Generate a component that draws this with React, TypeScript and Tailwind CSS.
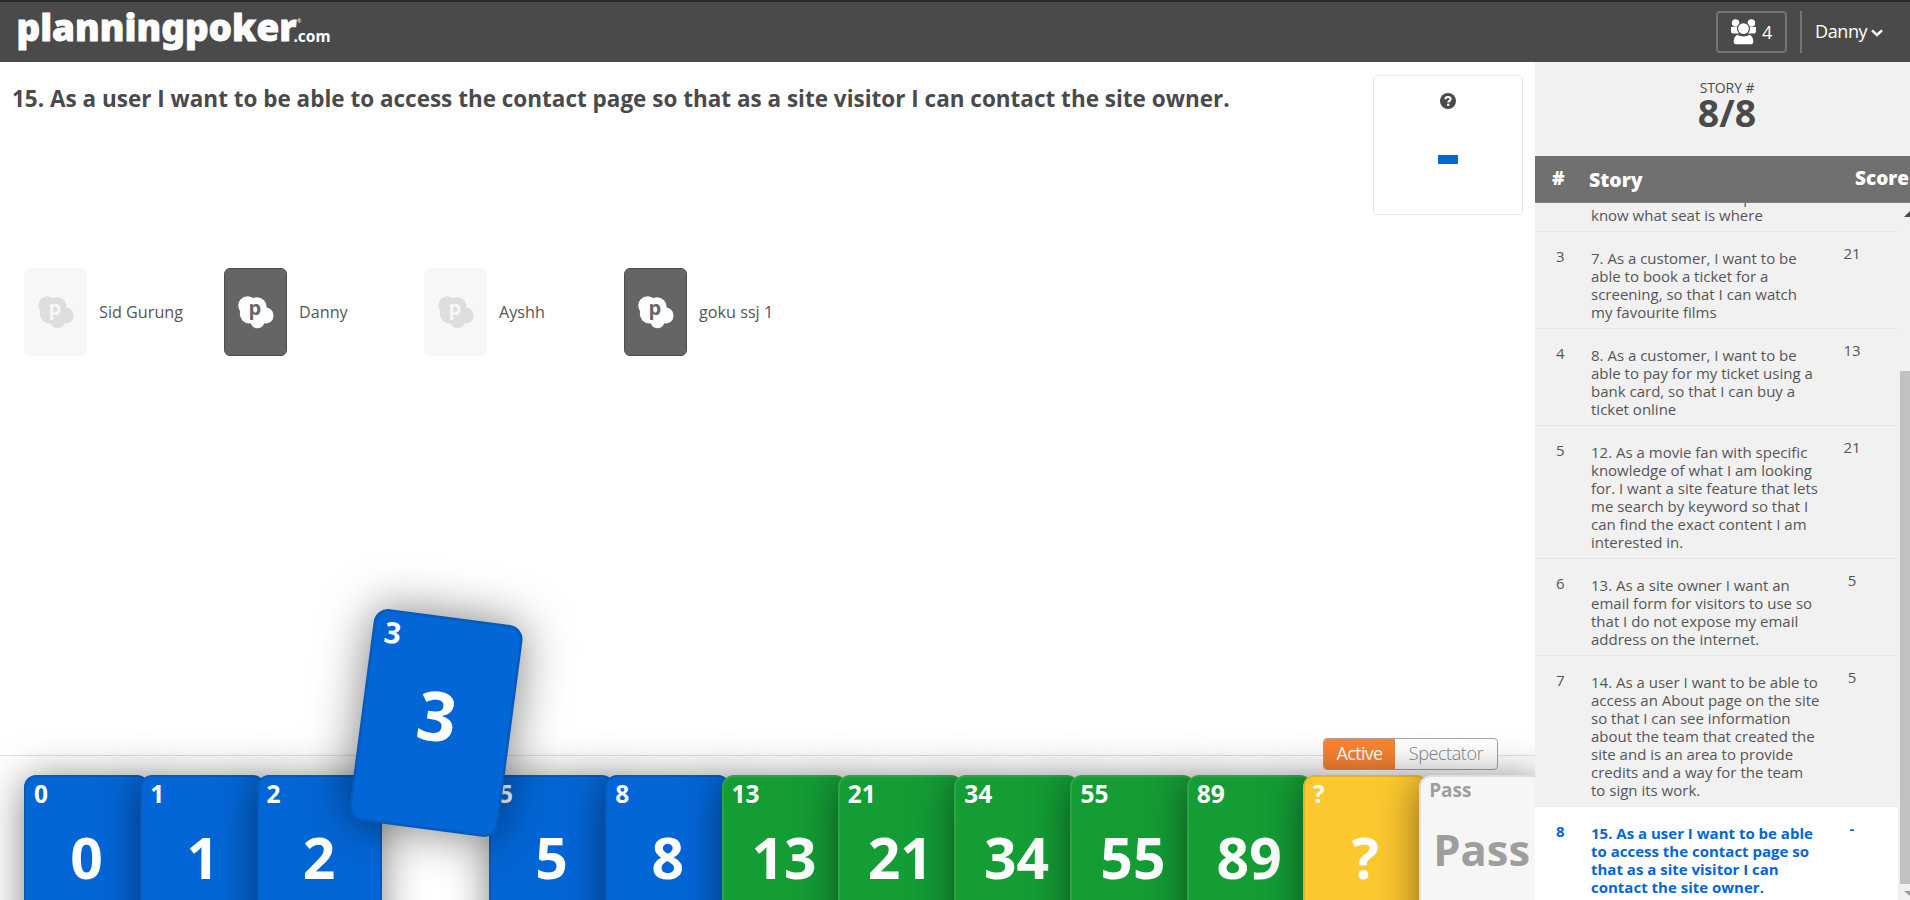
import React from "react";

type Tone = "blue" | "green" | "yellow" | "pass";

const TONES: Record<Tone, string> = {
  blue: "bg-[#0366d6] border-[#055bbd] text-white",
  green: "bg-[#149d35] border-[#2ba449] text-white",
  yellow: "bg-[#fdc82f] border-[#e6b328] text-white",
  pass: "bg-[#f6f6f6] border-[#dedede] text-[#9e9e9e]",
};

const DECK: { label: string; tone: Tone; picked?: boolean }[] = [
  { label: "0", tone: "blue" },
  { label: "1", tone: "blue" },
  { label: "2", tone: "blue" },
  { label: "3", tone: "blue", picked: true },
  { label: "5", tone: "blue" },
  { label: "8", tone: "blue" },
  { label: "13", tone: "green" },
  { label: "21", tone: "green" },
  { label: "34", tone: "green" },
  { label: "55", tone: "green" },
  { label: "89", tone: "green" },
  { label: "?", tone: "yellow" },
  { label: "Pass", tone: "pass" },
];

const STORIES = [
  { n: "3", score: "21", lines: ["7. As a customer, I want to be", "able to book a ticket for a", "screening, so that I can watch", "my favourite films"] },
  { n: "4", score: "13", lines: ["8. As a customer, I want to be", "able to pay for my ticket using a", "bank card, so that I can buy a", "ticket online"] },
  { n: "5", score: "21", lines: ["12. As a movie fan with specific", "knowledge of what I am looking", "for. I want a site feature that lets", "me search by keyword so that I", "can find the exact content I am", "interested in."] },
  { n: "6", score: "5", lines: ["13. As a site owner I want an", "email form for visitors to use so", "that I do not expose my email", "address on the internet."] },
  { n: "7", score: "5", lines: ["14. As a user I want to be able to", "access an About page on the site", "so that I can see information", "about the team that created the", "site and is an area to provide", "credits and a way for the team", "to sign its work."] },
  { n: "8", score: "-", active: true, lines: ["15. As a user I want to be able", "to access the contact page so", "that as a site visitor I can", "contact the site owner."] },
];

const PLAYERS = [
  { name: "Sid Gurung", voted: false },
  { name: "Danny", voted: true },
  { name: "Ayshh", voted: false },
  { name: "goku ssj 1", voted: true },
];

function Logo() {
  return (
    <svg width="340" height="60" className="block" fill="#fff" fontFamily="'Noto Sans', sans-serif">
      <text x="16.500" y="39" fontSize="37" fontWeight="900" textLength="280" lengthAdjust="spacingAndGlyphs" stroke="#fff" strokeWidth="0.8">planningpoker</text>
      <text x="293.500" y="39.500" fontSize="15.500" fontWeight="700" textLength="37" lengthAdjust="spacingAndGlyphs">.com</text>
      <text x="297" y="21" fontSize="5">®</text>
    </svg>
  );
}

function People() {
  return (
    <svg width="25" height="26" viewBox="0 0 25 26" fill="#fff">
      <circle cx="4.600" cy="4" r="3.800" />
      <circle cx="20.400" cy="4" r="3.800" />
      <path d="M0 8h7.500l1 6.500H2.200A2.200 2.200 0 0 1 0 12.300zM25 8h-7.500l-1 6.500h6.300a2.200 2.200 0 0 0 2.200-2.200z" />
      <circle cx="12.500" cy="9.600" r="6" stroke="#4a4a4a" strokeWidth="1.200" />
      <path d="M6.500 15.800c3 2.200 9 2.200 12 0 2.500 1 3.500 3.500 3.800 6 .2 2.200-.6 3.500-2.300 3.500H5c-1.700 0-2.500-1.300-2.300-3.500.3-2.500 1.300-5 3.800-6z" />
    </svg>
  );
}

function Cloud({ voted }: { voted: boolean }) {
  return (
    <svg width="36" height="33" viewBox="0 0 36 33" fill={voted ? "#fff" : "#dedede"}>
      <circle cx="9.600" cy="9.600" r="9.400" />
      <circle cx="19" cy="11" r="9.700" />
      <circle cx="11.500" cy="17.800" r="9.700" />
      <circle cx="27.500" cy="19.500" r="8.100" />
      <circle cx="19.500" cy="25.300" r="7" />
      <path d="M8 12h18v15H10z" />
      <text x="10.500" y="18.500" fontSize="20" fontWeight="700" fill={voted ? "#656565" : "#f7f7f7"} fontFamily="'Open Sans', sans-serif">p</text>
    </svg>
  );
}

function PokerCard({ label, tone, picked }: { label: string; tone: Tone; picked?: boolean }) {
  const pass = tone === "pass";
  return (
    <div className={"w-[116.27px] shrink-0 " + (picked ? "relative z-10" : "relative")}>
      <div
        className={
          "flex h-[178px] w-[125px] flex-col rounded-[12px] border-2 font-bold " +
          TONES[tone] +
          (picked
            ? " translate-x-[0.5px] translate-y-[-141px] rotate-[7.5deg] scale-[1.2] shadow-[0_0_40px_rgba(0,0,0,0.5)]"
            : " shadow-[0_4px_40px_rgba(0,0,0,0.5)]")
        }
      >
        <div className={pass ? "mt-px h-[29px] pl-[8px] text-[19px] leading-[25px]" : "mt-[3px] h-[27px] pl-[8px] text-[24.500px] leading-[28px]"}>{label}</div>
        <div className={pass ? "mt-[13px] text-center text-[43.500px] leading-[60px]" : "mt-[20px] text-center text-[57px] leading-[60px]"}>{label}</div>
      </div>
    </div>
  );
}

export default function App() {
  return (
    <div className="flex h-[900px] w-[1910px] flex-col overflow-hidden bg-white font-['Open_Sans',sans-serif] text-[#4a4a4a]">
      <header className="flex h-[62px] shrink-0 items-start justify-between border-t-2 border-[#2a2a2a] bg-[#4a4a4a] text-white">
        <Logo />
        <div className="flex pt-[9px]">
          <div className="flex h-[42px] w-[71px] items-center rounded-[4px] border-2 border-[#757575] pl-[13px]">
            <People />
            <span className="pl-[6px] text-[18px]">4</span>
          </div>
          <div className="ml-[13px] h-[42px] w-[2px] bg-[#757575]" />
          <div className="flex w-[108px] items-center pb-[2px] pl-[13px] text-[18px] tracking-[-0.4px]">
            Danny
            <svg width="12" height="8" viewBox="0 0 12 8" className="mt-[4px] ml-[4px]" fill="none" stroke="#fff" strokeWidth="2.500"><path d="M1 1.300 6 6l5-4.700" /></svg>
          </div>
        </div>
      </header>

      <div className="flex min-h-0 flex-1">
        <main className="flex w-[1535px] shrink-0 flex-col overflow-hidden">
          <div className="flex h-[206px] shrink-0 justify-between pt-[13px] pr-[12px] pl-[12px]">
            <h1 className="w-[1300px] origin-left scale-x-[0.937] pt-[7px] text-[24px] leading-[32px] font-bold whitespace-nowrap">15. As a user I want to be able to access the contact page so that as a site visitor I can contact the site owner.</h1>
            <div className="flex h-[140px] w-[150px] flex-col items-center rounded-[5px] border border-[#e8e8e8] pt-[17px]">
              <svg width="16" height="16" viewBox="0 0 16 16"><circle cx="8" cy="8" r="8" fill="#4a4a4a" /><path d="M5.400 6.300C5.400 3.100 10.600 3.300 10.600 6c0 1.900-2.300 1.700-2.300 3.500" fill="none" stroke="#fff" strokeWidth="2.100" /><rect x="7.100" y="10.700" width="2.300" height="2.200" fill="#fff" /></svg>
              <div className="mt-[46px] mr-px h-[9px] w-[20px] bg-[#0366d6]" />
            </div>
          </div>
          <div className="flex h-[88px] shrink-0 pl-[24px]">
            {PLAYERS.map((p) => (
              <div key={p.name} className="flex w-[200px] items-center">
                <div className={"flex h-[88px] w-[63px] items-center justify-center rounded-[6px] border " + (p.voted ? "border-[#4e4e4e] bg-[#656565]" : "border-[#f7f7f7] bg-[#f7f7f7]")}>
                  <Cloud voted={p.voted} />
                </div>
                <span className="pl-[12px] text-[16.200px] text-[#555]">{p.name}</span>
              </div>
            ))}
          </div>
          <div className="flex-1" />
          <div className="flex h-[30px] shrink-0 items-center">
            <div className="h-px w-full bg-[#e3e3e3]" />
          </div>
          <div className="relative h-[130px] shrink-0">
            <div className="absolute top-[-32px] left-[1323px] flex h-[32px] w-[175px] overflow-hidden rounded-[4px] border border-[#a5a5a5] bg-white text-center text-[18px] leading-[29px]">
              <span className="w-[71px] bg-[#f98433] tracking-[-0.7px] text-white">Active</span>
              <span className="flex-1 font-light tracking-[-0.4px] text-[#888]">Spectator</span>
            </div>
            <div className="flex pt-[5px] pl-[24px]">
              {DECK.map((c) => <PokerCard key={c.label} {...c} />)}
            </div>
          </div>
        </main>

        <aside className="relative z-20 flex w-[375px] shrink-0 flex-col overflow-hidden bg-[#f1f1f1]">
          <div className="flex h-[94px] shrink-0 flex-col items-center pt-[17px] pl-[9px]">
            <span className="text-[14px] leading-[18px] tracking-[-0.1px]">STORY #</span>
            <span className="text-[37.500px] leading-[32px] font-bold">8/8</span>
          </div>
          <div className="flex h-[47px] shrink-0 border-b border-[#7d7d7d] bg-[#707070] font-extrabold text-white">
            <span className="w-[54px] pt-[9px] pl-[17px] text-[19px] leading-[26px]">#</span>
            <span className="w-[266px] pt-[11px] text-[19.500px] leading-[26px]">Story</span>
            <span className="pt-[9px] text-[19px] leading-[26px]">Score</span>
          </div>
          <div className="flex min-h-0 flex-1">
            <div className="flex w-[363px] flex-col overflow-hidden text-[15px] leading-[18px] text-[#565656]">
              <div className="flex h-[29px] shrink-0 flex-col justify-end overflow-hidden border-b border-[#e6e6e6] pb-[7px] pl-[56px]">
                <span>have row labels to help me</span>
                <span>know what seat is where</span>
              </div>
              {STORIES.map((s) => (
                <div key={s.n} className={"flex shrink-0 border-b border-[#e6e6e6] pt-[17px] pb-[7px] " + (s.active ? "bg-white font-bold text-[#0366d6]" : "")}>
                  <span className="mt-[-2px] w-[56px] pl-[21px]">{s.n}</span>
                  <div className="w-[231px] whitespace-nowrap">{s.lines.map((l) => <div key={l}>{l}</div>)}</div>
                  <span className="mt-[-5px] w-[60px] text-center">{s.score}</span>
                </div>
              ))}
            </div>
            <div className="flex w-[12px] flex-col items-end overflow-hidden">
              <svg width="6" height="168" className="shrink-0"><path d="M0 14 6 8v6z" fill="#4a4a4a" /></svg>
              <div className="h-[513px] w-[10px] shrink-0 bg-[#c1c1c1]" />
              <svg width="6" height="16" className="shrink-0"><path d="M0 7h6v5z" fill="#9a9a9a" /></svg>
            </div>
          </div>
        </aside>
      </div>
    </div>
  );
}
